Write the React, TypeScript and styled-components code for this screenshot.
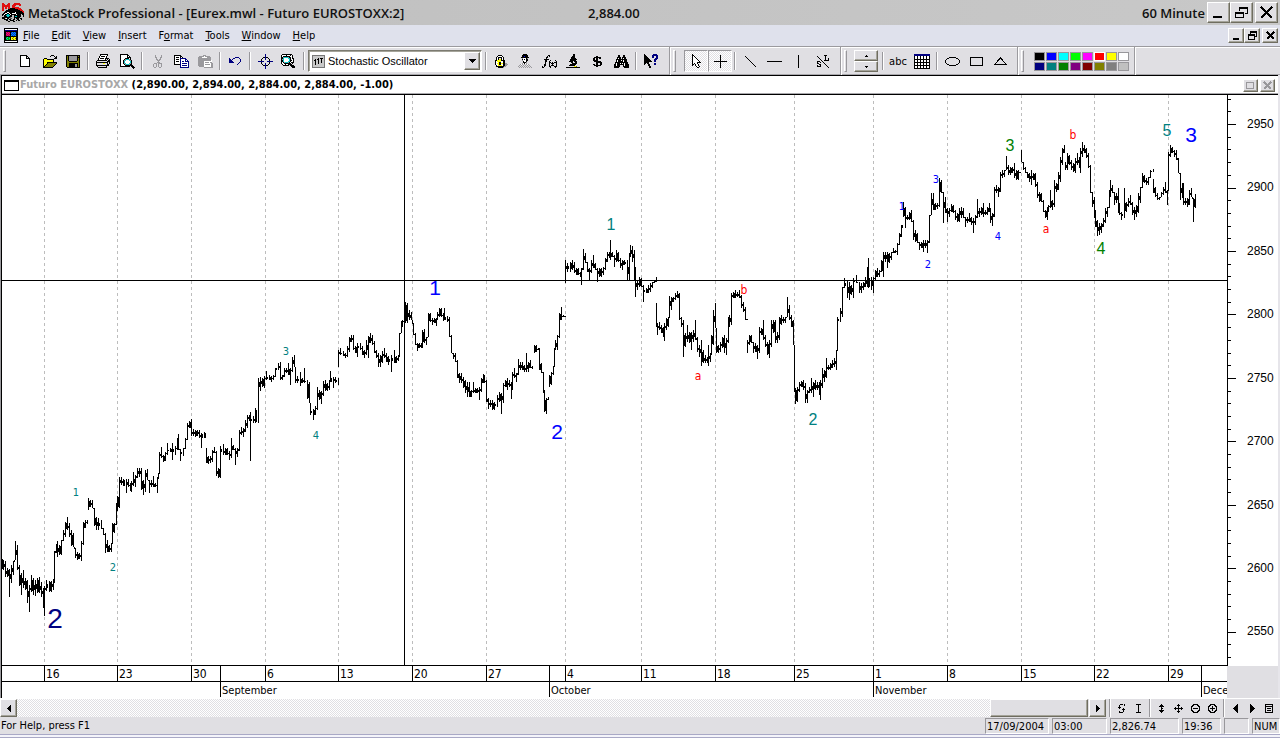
import React from "react";
import styled, { createGlobalStyle, css } from "styled-components";

const ui = `"DejaVu Sans Condensed", "Noto Sans", sans-serif`;
const sans = `"Liberation Sans", Arial, sans-serif`;
const face = "#e0dfe3";

const Global = createGlobalStyle`
  * { box-sizing: border-box; }
  body { margin: 0; background: ${face}; font-family: ${ui}; font-size: 11px; color: #000; }
  button, select { font: inherit; color: inherit; padding: 0; margin: 0; border-radius: 0; }
`;

const raised = css`
  background: ${face};
  border: 1px solid;
  border-color: #fff #6f6d60 #6f6d60 #fff;
  box-shadow: inset -1px -1px 0 #a5a49a;
`;
const dither = css`
  background: repeating-conic-gradient(#fff 0 25%, ${face} 0 50%) 0 0 / 2px 2px;
`;

const Shell = styled.div`
  display: flex;
  flex-direction: column;
  min-height: 100vh;
`;
const TitleBar = styled.header`
  display: grid;
  grid-template-columns: 24px minmax(0, 1fr) minmax(0, 1fr) auto auto;
  align-items: center;
  height: 25px;
  padding: 0 2px;
  background: linear-gradient(90deg, #bfbfbf, #c8c8c8);
  font: 600 13px/20px "Open Sans", sans-serif;
  color: #111;
  white-space: nowrap;
`;
const TitleText = styled.h1`
  margin: 0;
  padding-left: 2px;
  font: inherit;
`;
const LastPrice = styled.span`
  padding-left: 4px;
`;
const WindowButtons = styled.div`
  display: flex;
  align-items: center;
  padding-left: 2px;
`;
const WinButton = styled.button<{ $w: number; $h: number; $gap?: number }>`
  ${raised}
  width: ${(p) => p.$w}px;
  height: ${(p) => p.$h}px;
  margin-left: ${(p) => p.$gap ?? 0}px;
  display: flex;
  align-items: center;
  justify-content: center;
`;
const MenuBar = styled.nav`
  display: flex;
  align-items: center;
  height: 21px;
  padding: 0 2px 0 4px;
  background: #dfe1ec;
`;
const MenuItems = styled.div`
  display: flex;
  flex: 1;
  gap: 12px;
  padding-left: 5px;
`;
const MenuButton = styled.button`
  border: 0;
  background: none;
  line-height: 16px;
`;
const Toolbars = styled.div`
  display: flex;
  height: 29px;
  border-top: 1px solid #9b9a9e;
  box-shadow: inset 0 1px 0 #fff, inset 0 -1px 0 #a9a8ac;
`;
const Band = styled.div<{ $w: number; $lead: number }>`
  display: flex;
  align-items: center;
  flex: 0 0 ${(p) => p.$w}px;
  border-right: 1px solid #9b9a9e;
  box-shadow: 1px 0 0 #fff;
  & > :nth-child(2) { margin-left: ${(p) => p.$lead}px; }
`;
const Grip = styled.span`
  width: 3px;
  height: 22px;
  margin-left: 3px;
  border: 1px solid;
  border-color: #fff #98979b #98979b #fff;
`;
const Divider = styled.span`
  width: 2px;
  height: 18px;
  margin: 0 2px;
  border-left: 1px solid #98979b;
  border-right: 1px solid #fff;
`;
const Tool = styled.button<{ $on?: boolean }>`
  display: flex;
  align-items: center;
  justify-content: center;
  width: 24px;
  height: 22px;
  border: 1px solid transparent;
  background: none;
  ${(p) => p.$on && css`
    ${dither}
    border-color: #98979b #fff #fff #98979b;
  `}
`;
const Combo = styled.label`
  display: flex;
  align-items: center;
  width: 174px;
  height: 22px;
  margin: 0 1px;
  padding: 0 1px 0 3px;
  background: #fff;
  border: 1px solid;
  border-color: #7b7a70 #fff #fff #7b7a70;
  box-shadow: inset 1px 1px 0 #a5a49a;
  font-family: ${sans};
  select {
    flex: 1;
    min-width: 0;
    height: 18px;
    padding-left: 3px;
    border: 0;
    background: none;
    appearance: none;
    outline: none;
  }
`;
const ComboArrow = styled.span`
  ${raised}
  display: flex;
  align-items: center;
  justify-content: center;
  width: 16px;
  height: 18px;
`;
const Spinner = styled.div`
  display: flex;
  flex-direction: column;
  width: 24px;
  margin-right: 2px;
`;
const SpinButton = styled.button`
  ${raised}
  height: 11px;
  display: flex;
  align-items: center;
  justify-content: center;
`;
const Palette = styled.div`
  display: grid;
  grid-template-columns: repeat(8, 11px);
  grid-auto-rows: 9px;
  gap: 1px;
`;
const Swatch = styled.button<{ $c: string; $on?: boolean }>`
  background: ${(p) => p.$c};
  border: 1px solid ${(p) => (p.$on ? "#fff" : "#98979b")};
`;
const DocFrame = styled.main`
  border-left: 1px solid #9b9a9e;
  border-right: 2px solid #e6e5ea;
`;
const DocBar = styled.div`
  display: flex;
  align-items: center;
  height: 20px;
  padding: 0 3px 0 2px;
  border: 1px solid #000;
  border-right: 0;
  box-shadow: inset 0 -1px 0 #a9a8ac;
  background: #fff;
  font: bold 11px/16px ${ui};
  white-space: pre;
`;
const SystemBox = styled.span`
  width: 15px;
  height: 11px;
  margin-right: 1px;
  border: 1px solid #000;
  border-top-width: 2px;
`;
const DocName = styled.span`
  color: #a8a8a8;
`;
const DocValues = styled.span`
  flex: 1;
`;
const ChartGrid = styled.div`
  display: grid;
  grid-template-columns: minmax(0, 1fr) 51px;
  border-left: 1px solid #000;
`;
const Plot = styled.svg`
  display: block;
  width: 100%;
  height: 603px;
  background: #fff;
  text { font-family: ${ui}; font-size: 11px; }
`;
const PriceAxis = styled.svg`
  display: block;
  width: 100%;
  height: 571px;
  background: #fff;
  text { font-family: ${sans}; font-size: 12px; }
`;
const ScrollRow = styled.div`
  display: flex;
  align-items: center;
  height: 19px;
  padding-right: 2px;
  border-top: 1px solid #fff;
`;
const Track = styled.div`
  ${dither}
  display: flex;
  justify-content: flex-end;
  flex: 1;
  height: 18px;
`;
const Thumb = styled.div`
  ${raised}
  width: 98px;
`;
const ScrollButton = styled(WinButton)`
  margin-right: 1px;
`;
const SmallTool = styled.button`
  display: flex;
  align-items: center;
  justify-content: center;
  width: 17px;
  height: 17px;
  border: 0;
  background: none;
`;
const StatusBar = styled.footer`
  display: flex;
  align-items: center;
  gap: 3px;
  height: 17px;
  padding-left: 1px;
  p { flex: 1; margin: 0; }
`;
const Pane = styled.span<{ $w: number }>`
  width: ${(p) => p.$w}px;
  height: 16px;
  padding-left: 1px;
  line-height: 15px;
  border: 1px solid;
  border-color: #98979b #fff #fff #98979b;
`;
const BottomEdge = styled.div`
  height: 4px;
  border-top: 1px solid #a9a9c6;
  border-bottom: 1px solid #a9a9c6;
  background: #f4f4fa;
`;

/* Icons: strokes sit on whole pixels, so they are drawn without smoothing. */
function Icon({ children, w = 16, h = 16 }: { children: React.ReactNode; w?: number; h?: number }) {
  return (
    <svg width={w} height={h} viewBox={`0 0 ${w} ${h}`} fill="none" stroke="#000" shapeRendering="crispEdges" aria-hidden="true">
      {children}
    </svg>
  );
}
/* Pixel rows: each character picks a colour, a dot leaves the pixel empty. */
const inks: Record<string, string> = {
  k: "#000", w: "#fff", g: "#9a999d", y: "#ffff00", o: "#808000", n: "#000080", c: "#00c8c8", r: "#e01010", m: "#c000c0", b: "#0000ff", e: "#00b000", d: "#555",
};
function Pixels({ rows }: { rows: string[] }) {
  const w = Math.max(...rows.map((r) => r.length));
  return (
    <svg width={w} height={rows.length} shapeRendering="crispEdges" aria-hidden="true">
      {rows.flatMap((row, y) =>
        [...row].map((ch, x) => (inks[ch] ? <rect key={`${x}-${y}`} x={x} y={y} width="1" height="1" fill={inks[ch]} /> : null))
      )}
    </svg>
  );
}

const logo = [
  "rr....rr....rrrrrr......",
  "rrr..rrr...rrrrrrrr.....",
  "rrrrrrrr..rrrr...rr.....",
  "rrrrrrrr..rrr...........",
  "rr.rr.rr..rrrrrrr.......",
  "rr.rr.rrkkkkkrrrrrr.....",
  "rr....kkkkkkkkkkrrrr....",
  "rr..kkkkkkkkkkkkkkrrr...",
  "...kkkkkkkkkkkkkkkkkrr..",
  "..kkkwwkkkkkkwkkkkkkkr..",
  ".kkwwkkwkkwwwwkkkkkkkk..",
  "kkwkkcckwkkkkkwkkkk.kk..",
  "k.kkcccckk..kkkkkkk..k..",
  "..kkkcckkk..kcckkkk..k..",
  "kkkkkkkkd...kkkkkk......",
  "kkk.wkk.dd..k.kkk.kk....",
  "..kkkk.kk..kk..kk..k....",
  "....kk..kkkk..k.kk......",
  "......kk...kk...........",
];
const mdiIcon = [
  "kkkkkkkkkkkkkk",
  "kwwwwwwwwwwwwk",
  "knnnnnnnnnnnnk",
  "kkkkkkkkkkkkkk",
  "kkmrmrkbcbcbkk",
  "kkrmrmkcbcbckk",
  "kkmrmrkbcbcbkk",
  "kkrmrmkcbcbckk",
  "kkkkkkkkkkkkkk",
  "kkeceekyyoyykk",
  "kkceeckyoyyokk",
  "kkeceekyyoyykk",
  "kkkkkkkkkkkkkk",
  "kwwwwwwwwwwwwk",
  "kkkkkkkkkkkkkk",
];
const lockIcon = [
  "....kkkk......",
  "...kwwwwk.....",
  "..kwkkkkwk....",
  "..kwk..kwk....",
  "..kwkyykwk....",
  ".kkyyyykkkk...",
  ".kwyyyywwkk...",
  ".kwwykkwwkk...",
  ".kwyykkyykkgg.",
  ".kwwykkwwkkggg",
  "..kwyyyywkkgg.",
  "..kkkkkkkkgg..",
  "....kkkkkg....",
];
const expertIcon = [
  ".....kkkk.....",
  "....kkkkkk....",
  "....kkbkkk....",
  "...kkkkkkkk...",
  "....gwwwkg....",
  "....kwkwkk....",
  "....gwwwkk....",
  ".....kwwk.....",
  ".....kkkg.....",
  "....gwkwg.....",
  "..gwg.g.gwg...",
  ".g.g.g.g.g.g..",
  "g.g.g.g.g.g.g.",
  ".g.g.g.g.g.g.g",
];
const scopeIcon = [
  ".......kk.....",
  ".......kk.....",
  "......kkk.....",
  ".....kkkk.....",
  ".....kkkkk....",
  "....kkkkkkk...",
  "....kkkkkk....",
  "...kkkk.kkk...",
  ".....kk..kk...",
  "......kkkkk...",
  "....kkkkkk....",
  "...kkkkkk.....",
  "........yyo...",
  "kkkkkkkkkkkkkk",
];
const binoculars = [
  "....kk...kk....",
  "....kk...kk....",
  "...kkkk.kkkk...",
  "...kwkk.kwkk...",
  "..kkkkkkkkkkk..",
  "..kwkkkwkwkkk..",
  "..kwkkkkkwkkk..",
  ".kkkkkkkkkkkkk.",
  ".kwkkkwkwkwkkk.",
  "kkwkkkkkkkwkkkk",
  "kkwkkk...kwkkkk",
  "kkkkkk...kkkkkk",
  "kkkkk.....kkkkk",
];
const helpIcon = [
  "k........nnnn..",
  "kk......nnnnnn.",
  "kkk.....nn..nn.",
  "kkkk....nn..nn.",
  "kkkkk......nnn.",
  "kkkkkk....nnn..",
  "kkkkkkk...nn...",
  "kkkkkkkk..nn...",
  "kkkkk..........",
  "kk.kk.....nn...",
  "k...kk....nn...",
  "....kk.........",
  ".....kk........",
  ".....kk........",
];
const dollar = [
  "....kk.....",
  "..kkkkkkk..",
  ".kk.kk.kk..",
  ".kk.kk.....",
  ".kkkkk.....",
  "..kkkkkkk..",
  "....kkkkkk.",
  "....kk..kk.",
  ".kk.kk..kk.",
  "..kkkkkkk..",
  "....kk.....",
];
const fxIcon = [
  "......kk.......",
  ".....k.k.......",
  "....kk.........",
  "....k..........",
  "..kkkkk........",
  "...kk...k....k.",
  "...kk..k......k",
  "...k...kk.k.kkk",
  "...k...k.kkk..k",
  "..kk...k..k...k",
  "..kk...k.kkk..k",
  "k.k....kk...kkk",
  "kk......k....k.",
];
const arrowPointer = [
  "k........",
  "kk.......",
  "kwk......",
  "kwwk.....",
  "kwwwk....",
  "kwwwwk...",
  "kwwwwwk..",
  "kwwwwwwk.",
  "kwwwwkkkk",
  "kwkwwk...",
  "kk.kwwk..",
  "k..kwwk..",
  "....kwwk.",
  ".....kk..",
];
const slIcon = [
  "........kkk..",
  ".k.......k...",
  "..k......k...",
  "...k.....k..k",
  "....k....k..k",
  ".....k..kkkkk",
  ".kkk..k......",
  ".k..k..k.....",
  ".kk.....k....",
  "...kk....k...",
  ".k..k.....k..",
  ".kkkk......k.",
  "............k",
];
const saveIcon = [
  "kkkkkkkkkkkkkk",
  "kokggggggggkok",
  "kokggggggggkkk",
  "kokggggggggkok",
  "kokggggggggkok",
  "kokggggggggkok",
  "kookkkkkkkkook",
  "kooooooooooook",
  "kookkkkkkkkkok",
  "kookkkkkkggkok",
  "kookkkkkkggkok",
  "kookkkkkkggkok",
  ".kkkkkkkkkkkkk",
];
const openIcon = [
  ".........kkk...",
  "........k...k.k",
  ".............kk",
  "..kkk.......kkk",
  ".kyyykkkkkkk...",
  ".kyyyyyyyyyk...",
  ".kyyyyyyyyyk...",
  ".kyyykkkkkkkkkk",
  ".kyyykooooooook",
  ".kyykooooooook.",
  ".kykooooooook..",
  ".kkooooooook...",
  ".kkkkkkkkkk....",
];
const printIcon = [
  "....kkkkkkkk...",
  "....kwwwwwwk...",
  "...kwkkkkwk....",
  "...kwwwwwwk....",
  "..kwkkkkwkkkk..",
  "..kwwwwwwk.k.k.",
  ".kkkkkkkkkk.kk.",
  "k..........kkk.",
  "kkkkkkkkkkkk.k.",
  "k......yy..k.k.",
  "k..........kk..",
  "kkkkkkkkkkkkk..",
  ".k........k....",
  "..kkkkkkkkk....",
];
const previewIcon = [
  "kkkkkkkk.......",
  "kwwwwwwkk......",
  "kwwwwwwkwk.....",
  "kwwwwwwkkkk....",
  "kwwwwkkkkwk....",
  "kwwwkgcccgk....",
  "kwwkgcwwwcgk...",
  "kwwkcwwwwwck...",
  "kwwkcwwwwwck...",
  "kwwkgcwwwcgk...",
  "kwwwkgcccgkk...",
  "kwwwwkkkkkkkk..",
  "kkkkkkkkkk.kkk.",
  "............kkk",
  ".............k.",
];
const cutIcon = [
  "...g.....g",
  "...g.....g",
  "...gg...gg",
  "....g...g.",
  "....gg.gg.",
  ".....ggg..",
  "......g...",
  ".....ggg..",
  "..ggg.gggg",
  ".g..g.g..g",
  ".g..g.g..g",
  ".g..g.g..g",
  "..gg...gg.",
];
const copyIcon = [
  "kkkkkkk........",
  "kwwwwwkk.......",
  "kwkkkwkwk......",
  "kwwwwwnnnnnn...",
  "kwkkkwnwwwwnn..",
  "kwwwwwnwwwwnwn.",
  "kwkkkwnwnnwnnnn",
  "kwwwwwnwwwwwwwn",
  "kwwwwwnwnnnnnwn",
  "kkkkkknwwwwwwwn",
  "......nwnnnnnwn",
  "......nwwwwwwwn",
  "......nnnnnnnnn",
];
const pasteIcon = [
  ".....ggg.......",
  ".gggggwggggg...",
  "ggggwwwwwgggg..",
  "ggggggggggggg..",
  "ggggggggggggg..",
  "gggggggggggggw.",
  "ggggggwwwwwwww.",
  "ggggggwggggwgg.",
  "ggggggwwwwwwwgg",
  "ggggggwgggggwgg",
  "ggggggwwwwwwwgg",
  ".gggggwwwwwwwgg",
  "......ggggggggg",
];
const undoIcon = [
  "......nnnn..",
  "n...nn....n.",
  "nn.n.......n",
  "nnn........n",
  "nnnn.......n",
  "nnnnn.....n.",
  ".........n..",
  "........n...",
];
const searchIcon = [
  ".kkkkkkkkkk.....",
  "kwwwwkwwwkwk....",
  "kwkkkkkkkwwk....",
  "kkgccccgkkwk....",
  "kkcwwwwcckwkk...",
  "kgcwwwwwck.wk...",
  "kkcwwwwwckkwk...",
  "kkcwwwwcckwwk...",
  "kwkgcccgkwkkk...",
  "kwwkkkkkkk.k....",
  ".kwwkwwkkkk.....",
  "..kkkkkk.kkkk...",
  "..........kkkk..",
  "...........kkk..",
];

function Tri({ d, w, h }: { d: string; w: number; h: number }) {
  return (
    <svg width={w} height={h} aria-hidden="true" shapeRendering="crispEdges">
      <path d={d} />
    </svg>
  );
}

/* Price bars: x, top and bottom of each bar. */
const bars = `2 559 569,3 560 570,5 561 577,7 568 577,9 569 597,11 565 583,13 561 575,15 541 560,17 545 570,19 565 586,21 573 595,23 570 588,25 578 590,27 580 603,29 585 612,31 575 592,33 578 595,35 580 596,37 578 593,39 577 593,41 582 597,43 588 608,44 586 616,46 580 591,49 581 592,51 581 592,53 579 590,54 551 583,56 544 553,57 541 557,59 545 555,61 540 555,63 530 541,65 522 537,67 517 530,69 523 537,71 530 546,73 533 547,75 548 558,77 552 560,79 553 559,81 541 561,83 522 545,85 520 528,87 520 524,88 498 510,90 500 507,92 500 508,94 508 526,96 517 530,98 518 530,101 520 529,103 528 535,105 533 553,107 540 552,109 545 552,111 543 552,112 523 541,114 523 533,116 503 525,117 496 511,119 477 508,121 477 485,123 479 486,126 479 493,128 479 487,130 483 491,131 481 492,133 472 486,135 475 487,137 468 478,139 468 477,141 468 490,143 480 495,145 470 492,147 469 480,149 480 493,151 480 487,153 476 487,155 483 487,157 477 493,158 473 479,159 452 473,161 447 458,163 455 462,165 452 461,167 443 455,170 448 452,172 443 460,175 446 455,177 438 450,178 434 450,180 449 461,183 448 456,185 438 449,187 423 440,189 421 428,191 419 436,193 429 436,195 430 437,197 430 436,199 430 438,201 433 448,204 432 438,205 433 438,206 448 463,208 456 464,210 456 463,212 450 462,214 447 453,216 451 476,218 468 478,220 446 478,223 444 455,225 448 455,227 448 455,229 451 460,231 438 458,233 445 450,235 448 465,237 448 457,239 430 451,241 427 435,243 428 437,245 420 432,247 415 428,249 415 421,250 412 461,253 416 423,255 408 423,258 378 423,260 377 391,262 378 387,264 376 388,266 371 380,269 375 380,271 376 382,273 375 380,275 368 377,278 363 370,280 362 380,282 375 380,284 368 377,286 368 373,288 363 375,290 368 385,292 357 372,294 355 367,295 369 383,297 376 383,300 372 386,302 378 383,304 368 383,307 380 399,309 382 403,310 404 415,313 409 420,315 406 415,317 387 410,319 390 400,321 391 404,323 381 396,325 380 391,327 383 391,329 380 390,330 371 382,333 377 388,335 377 383,338 378 385,338 350 367,340 348 355,343 351 356,345 353 358,347 346 357,349 337 352,351 335 342,353 335 350,355 346 353,357 343 357,360 343 350,362 346 355,364 350 358,366 340 355,368 336 358,370 333 343,372 335 345,374 341 353,376 350 358,378 353 367,380 355 367,382 351 363,384 348 358,386 353 362,388 356 365,391 355 372,394 350 363,396 356 363,398 355 361,399 333 357,401 321 333,402 320 327,405 302 323,407 303 323,409 310 320,411 312 320,413 323 335,415 333 345,417 343 351,419 343 348,421 343 348,422 330 348,424 329 343,426 337 345,428 313 337,430 313 322,432 318 325,434 318 323,436 318 326,437 312 320,439 308 317,441 308 317,443 313 321,444 308 320,447 316 322,449 317 337,451 335 353,453 353 359,455 353 362,457 360 378,459 373 383,461 373 383,463 377 388,465 380 393,467 382 397,469 382 397,471 390 397,473 382 393,475 388 393,477 388 393,479 387 400,481 378 392,483 374 383,484 375 383,486 380 402,488 398 409,490 400 407,492 400 410,494 402 410,497 395 407,499 392 402,501 393 414,503 383 403,505 380 387,507 378 390,509 380 387,511 382 399,512 372 390,514 368 378,516 373 382,518 359 375,520 362 370,522 362 370,524 365 372,526 353 372,528 362 372,530 360 368,532 366 369,534 345 353,536 345 352,538 348 350,539 348 370,541 363 373,543 372 393,544 390 412,546 398 414,548 397 400,549 375 387,551 372 385,553 366 375,554 348 366,555 340 350,557 335 350,559 313 338,561 307 320,563 315 317,565 316 317,565 260 283,567 263 272,570 262 272,572 260 270,574 262 273,576 268 275,578 268 275,580 272 277,581 268 285,583 249 270,585 253 263,587 262 272,589 268 280,591 260 273,593 255 268,595 263 270,597 268 282,599 268 277,601 268 277,603 267 275,605 258 270,607 252 262,609 252 258,610 240 260,612 252 257,614 255 267,616 250 262,618 252 262,620 258 268,622 260 270,624 260 265,627 260 280,629 253 280,630 245 257,632 246 262,634 250 280,635 267 297,637 280 290,639 277 287,641 278 287,643 285 302,646 288 293,648 285 293,650 283 292,652 282 288,654 280 283,656 277 282,656 303 327,657 323 335,659 322 330,661 325 333,663 327 337,664 323 341,666 318 330,668 317 327,669 296 312,671 297 310,673 297 302,675 293 300,677 291 298,679 293 320,681 317 327,683 320 357,685 333 347,687 325 342,689 332 343,691 332 350,693 330 342,695 320 340,697 337 352,699 345 357,701 340 366,703 350 363,705 355 363,707 357 363,708 345 366,710 353 362,711 335 355,713 310 345,715 303 328,716 333 353,718 345 353,720 342 352,722 337 348,724 335 353,726 338 355,728 317 343,729 315 327,731 293 325,733 292 298,735 290 298,737 292 297,739 290 298,741 295 308,743 302 312,745 307 320,747 319 320,747 340 353,749 335 345,751 335 343,753 342 353,755 343 352,757 345 359,759 327 353,761 328 335,763 320 340,765 335 347,767 342 355,769 340 358,771 320 347,773 320 333,775 320 343,777 332 343,779 317 340,781 315 325,783 317 323,785 317 323,787 297 317,789 305 320,791 315 327,793 320 345,794 345 392,795 388 404,797 387 402,799 382 392,801 381 387,803 380 390,805 383 403,807 390 403,809 387 393,811 378 393,813 382 397,815 380 390,817 382 390,819 382 395,820 380 400,822 368 388,824 370 382,826 358 378,828 365 370,830 363 370,832 360 368,834 358 367,836 350 370,837 317 350,840 308 322,842 287 317,844 278 288,847 280 298,849 282 300,851 285 295,853 278 298,856 275 283,859 282 293,861 283 293,863 282 290,865 277 287,867 267 287,868 258 288,871 277 290,873 277 293,875 270 280,877 268 277,879 270 277,881 260 272,883 252 277,885 252 262,887 252 268,889 253 263,891 252 260,893 248 253,895 250 253,897 243 255,899 233 245,901 225 237,902 225 228,903 202 217,905 207 228,907 215 220,909 212 220,911 210 222,913 220 240,915 230 242,917 233 243,919 242 250,921 242 248,923 240 252,925 240 248,927 240 253,929 215 243,931 193 215,933 193 210,935 203 210,937 203 209,939 178 207,941 180 193,943 192 223,945 197 213,947 208 222,949 208 217,951 204 212,953 205 213,955 210 220,957 213 222,959 208 222,961 207 218,963 208 218,965 217 227,967 217 223,969 213 222,971 217 225,973 218 233,975 215 225,977 199 218,979 208 217,981 207 215,983 203 217,985 210 215,987 207 215,989 203 212,990 208 223,992 213 226,994 187 217,996 185 193,998 187 197,1000 172 192,1002 170 178,1004 170 177,1006 156 170,1008 165 175,1010 167 175,1012 167 173,1014 163 178,1016 170 180,1018 170 180,1020 172 173,1021 150 162,1023 162 170,1025 167 173,1027 172 178,1029 173 182,1031 170 185,1033 173 180,1035 173 187,1037 182 198,1039 192 202,1041 193 202,1043 200 212,1045 210 218,1047 207 220,1048 205 212,1050 190 208,1052 200 210,1054 180 207,1056 183 192,1058 172 190,1060 157 182,1062 148 165,1064 145 153,1065 162 170,1067 153 170,1069 155 165,1071 160 170,1073 163 172,1075 158 173,1077 153 165,1079 157 168,1080 148 173,1082 142 157,1084 145 153,1086 148 158,1088 153 168,1090 165 193,1092 192 207,1094 197 218,1095 210 227,1097 220 236,1099 223 235,1101 223 233,1103 218 227,1105 208 223,1107 207 217,1109 190 208,1110 180 197,1112 185 193,1114 192 205,1116 193 203,1118 188 213,1119 203 215,1121 212 220,1124 188 218,1126 202 212,1128 198 207,1130 195 205,1132 202 215,1134 207 220,1136 205 217,1138 193 213,1140 187 203,1142 173 188,1144 175 183,1146 178 185,1148 177 185,1150 170 178,1153 169 172,1153 179 193,1155 187 197,1157 193 200,1159 197 200,1161 192 197,1163 187 195,1165 182 193,1167 190 205,1168 152 185,1170 145 157,1172 147 153,1174 150 157,1176 150 160,1178 158 173,1180 173 200,1182 183 198,1183 183 205,1185 198 205,1187 198 207,1189 190 205,1191 188 197,1193 198 222,1195 194 208`
  .split(",")
  .map((b) => b.split(" ").map(Number));

const barPath = bars
  .map(([x, top, bottom], i) => {
    const bar = `M${x} ${top}h1V${bottom}h-1z`;
    const next = bars[i + 1];
    if (!next || next[0] - x > 3 || next[0] === x) return bar;
    const from = Math.max(top, next[1]);
    const to = Math.min(bottom, next[2]);
    if (to <= from) return to - from < -6 ? bar : `${bar}M${x + 1} ${to}h1V${from + 1}h-1z`;
    const size = Math.max(1, Math.round((to - from) * (i % 3 === 0 ? 0.8 : 0.35)));
    const start = Math.round((from + to - size) / 2);
    return `${bar}M${x + 1} ${start}h1v${size}h-1z`;
  })
  .join("");

const days: [number, string][] = [
  [44, "16"], [117, "23"], [191, "30"], [265, "6"], [338, "13"], [412, "20"], [486, "27"], [565, "4"],
  [641, "11"], [715, "18"], [794, "25"], [873, "1"], [947, "8"], [1021, "15"], [1094, "22"], [1168, "29"],
];
const months: [number, string][] = [[220, "September"], [549, "October"], [873, "November"], [1201, "December"]];
const blue = "#0000ff", teal = "#008080", green = "#008000", red = "#ff0000", navy = "#000080";
/* Wave labels: text, centre x, baseline, size, colour. */
const waves: [string, number, number, number, string][] = [
  ["2", 55, 628, 28, navy], ["1", 76, 496, 11, teal], ["2", 113, 571, 11, teal], ["3", 286, 355, 11, teal],
  ["4", 316, 439, 11, teal], ["1", 435, 295, 21, blue], ["2", 557, 439, 21, blue], ["1", 611, 230, 16, teal],
  ["a", 698, 380, 12, red], ["b", 744, 294, 12, red], ["2", 813, 425, 16, teal], ["1", 902, 210, 11, blue],
  ["2", 928, 268, 11, blue], ["3", 936, 183, 11, blue], ["4", 998, 240, 11, blue], ["3", 1010, 151, 16, green],
  ["a", 1046, 233, 12, red], ["b", 1073, 139, 12, red], ["4", 1101, 254, 16, green], ["5", 1167, 136, 16, teal],
  ["3", 1191, 142, 21, blue],
];
const prices = [2950, 2900, 2850, 2800, 2750, 2700, 2650, 2600, 2550];

const swatches = [
  "#000000", "#0000ff", "#00ffff", "#00ff00", "#ff00ff", "#ff0000", "#ffff00", "#ffffff",
  "#000080", "#008080", "#008000", "#800080", "#800000", "#808000", "#808080", "#c0c0c0",
];

function MinMaxClose({ small }: { small?: boolean }) {
  const [w, h] = small ? [16, 15] : [23, 21];
  return (
    <WindowButtons>
      <WinButton $w={w} $h={h} aria-label="Minimize">
        {small ? <Icon w={11} h={11}><path d="M2 9h6" strokeWidth="2" /></Icon> : <Icon w={15} h={15}><path d="M2 12h9" strokeWidth="2" /></Icon>}
      </WinButton>
      <WinButton $w={w} $h={h} aria-label="Restore">
        {small ? (
          <Icon w={11} h={11}><path d="M3.5 4V1.500h6v5h-2M1.500 4.500h6v5h-6zM3 2h7M1 5h7" /></Icon>
        ) : (
          <Icon w={15} h={15}><path d="M5.500 6V2.500h8v6h-3M1.500 7.500h8v5h-8zM5 3h9M1 8h9" /></Icon>
        )}
      </WinButton>
      <WinButton $w={w} $h={h} $gap={2} aria-label="Close">
        {small ? <Icon w={11} h={11}><path d="M2 2l7 7M9 2l-7 7" strokeWidth="2" /></Icon> : <Icon w={15} h={15}><path d="M2 2l11 11M13 2l-11 11" strokeWidth="2" /></Icon>}
      </WinButton>
    </WindowButtons>
  );
}

function Menu({ text, hot = 0 }: { text: string; hot?: number }) {
  return (
    <MenuButton>
      {text.slice(0, hot)}
      <u>{text[hot]}</u>
      {text.slice(hot + 1)}
    </MenuButton>
  );
}

function PixelTool({ label, rows }: { label: string; rows: string[] }) {
  return (
    <Tool aria-label={label}>
      <Pixels rows={rows} />
    </Tool>
  );
}

function PriceChart() {
  return (
    <ChartGrid>
      <Plot role="img" aria-label="Futuro EUROSTOXX 60 minute price chart">
        <g transform="translate(-2 -95)">
          <g stroke="#bdbdbd" strokeDasharray="3 3" shapeRendering="crispEdges">
            {days.map(([x]) => <path key={x} d={`M${x}.5 95V665`} />)}
          </g>
          <path d={barPath} shapeRendering="crispEdges" />
          {waves.map(([t, x, y, size, color], i) => (
            <text key={i} x={x} y={y} textAnchor="middle" fill={color} style={{ fontSize: size, fontFamily: size > 12 ? sans : ui }}>
              {t}
            </text>
          ))}
          <g stroke="#000" shapeRendering="crispEdges">
            <path d="M404.500 95V665M2 280.500H1228M2 665.500H1228M2 681.500H1228" />
            {days.map(([x]) => <path key={x} d={`M${x}.5 665V681`} />)}
            {months.map(([x]) => <path key={x} d={`M${x}.5 665V697`} />)}
          </g>
          {days.map(([x, t]) => <text key={x} x={x + 2} y="678" style={{ fontSize: 12 }}>{t}</text>)}
          {months.map(([x, t]) => <text key={x} x={x + 2} y="694">{t}</text>)}
        </g>
      </Plot>
      <PriceAxis>
        <g transform="translate(-1227 -95)">
          <g stroke="#000" shapeRendering="crispEdges">
            <path d="M1227.500 95V666" />
            {Array.from({ length: 45 }, (_, i) => {
              const y = Math.round(98.700 + i * 12.690);
              return <path key={i} d={`M1228 ${y}.500h${i % 5 === 2 ? 8 : 3}`} />;
            })}
          </g>
          {prices.map((p, i) => (
            <text key={p} x="1247" y={Math.round(128 + i * 63.430)}>{p}</text>
          ))}
        </g>
      </PriceAxis>
    </ChartGrid>
  );
}

export default function App() {
  return (
    <Shell>
      <Global />
      <TitleBar>
        <Pixels rows={logo} />
        <TitleText>MetaStock Professional - [Eurex.mwl - Futuro EUROSTOXX:2]</TitleText>
        <LastPrice>2,884.00</LastPrice>
        <span>60 Minute</span>
        <MinMaxClose />
      </TitleBar>
      <MenuBar>
        <Pixels rows={mdiIcon} />
        <MenuItems>
          <Menu text="File" />
          <Menu text="Edit" />
          <Menu text="View" />
          <Menu text="Insert" />
          <Menu text="Format" hot={1} />
          <Menu text="Tools" />
          <Menu text="Window" />
          <Menu text="Help" />
        </MenuItems>
        <MinMaxClose small />
      </MenuBar>
      <Toolbars>
        <Band $w={670} $lead={7}>
          <Grip />
          <Tool aria-label="New">
            <Icon w={12} h={14}><path d="M1.500 1.500h6l3 3v8h-9zM7.500 1v3.500h3" fill="#fff" /></Icon>
          </Tool>
          <PixelTool label="Open" rows={openIcon} />
          <PixelTool label="Save" rows={saveIcon} />
          <Divider />
          <PixelTool label="Print" rows={printIcon} />
          <PixelTool label="Print preview" rows={previewIcon} />
          <Divider />
          <PixelTool label="Cut" rows={cutIcon} />
          <PixelTool label="Copy" rows={copyIcon} />
          <PixelTool label="Paste" rows={pasteIcon} />
          <Divider />
          <PixelTool label="Undo" rows={undoIcon} />
          <Divider />
          <Tool aria-label="Choose symbol">
            <Icon w={15} h={15}>
              <path d="M5.500 3.500h4l2 2v4l-2 2h-4l-2-2v-4z" />
              <path d="M7.500 0v6M7.500 9v6M0 7.500h6M9 7.500h6" stroke="#000080" />
            </Icon>
          </Tool>
          <PixelTool label="Explore" rows={searchIcon} />
          <Divider />
          <Combo>
            <Icon w={13} h={13}>
              <path d="M.5.5h12v12h-12z" fill="#c8c8c8" stroke="#777" />
              <path d="M3.500 4v6M2 5.500h2M6.500 3v6M5 4.500h2M9.500 3v5M8 3.500h3" />
            </Icon>
            <select aria-label="Indicator" defaultValue="Stochastic Oscillator">
              <option>Stochastic Oscillator</option>
            </select>
            <ComboArrow><Tri d="M0 0h7L3.500 4z" w={7} h={4} /></ComboArrow>
          </Combo>
          <Divider />
          <PixelTool label="Security" rows={lockIcon} />
          <PixelTool label="Expert advisor" rows={expertIcon} />
          <PixelTool label="Indicator builder" rows={fxIcon} />
          <PixelTool label="Explorer" rows={scopeIcon} />
          <PixelTool label="System tester" rows={dollar} />
          <PixelTool label="OptionScope" rows={binoculars} />
          <Divider />
          <PixelTool label="Context help" rows={helpIcon} />
        </Band>
        <Band $w={171} $lead={8}>
          <Grip />
          <Tool $on aria-label="Pointer"><Pixels rows={arrowPointer} /></Tool>
          <Tool $on aria-label="Crosshair"><Icon w={13} h={13}><path d="M6.500 0v13M0 6.500h13" /></Icon></Tool>
          <Divider />
          <Tool aria-label="Trendline"><Icon w={13} h={13}><path d="M1 1l11 11" /></Icon></Tool>
          <Tool aria-label="Horizontal line"><Icon w={15} h={15}><path d="M0 7.500h15" /></Icon></Tool>
          <Tool aria-label="Vertical line"><Icon w={13} h={13}><path d="M6.500 0v13" /></Icon></Tool>
          <PixelTool label="Speed lines" rows={slIcon} />
        </Band>
        <Band $w={177} $lead={7}>
          <Grip />
          <Spinner>
            <SpinButton aria-label="Up"><Tri d="M0 2L1.500 0L3 2z" w={3} h={2} /></SpinButton>
            <SpinButton aria-label="Down"><Tri d="M0 0h3L1.500 2z" w={3} h={2} /></SpinButton>
          </Spinner>
          <Divider />
          <Tool aria-label="Text"><span>abc</span></Tool>
          <Tool aria-label="Grid">
            <Icon w={16} h={15}>
              <path d="M.5.5h15v14H.5zM3.500 1v14M6.500 1v14M9.500 1v14M12.500 1v14M0 5.500h16M0 8.500h16M0 11.500h16" fill="#fff" />
              <path d="M0 1h16" stroke="#000080" strokeWidth="2" />
            </Icon>
          </Tool>
          <Divider />
          <Tool aria-label="Ellipse"><Icon w={15} h={11}><ellipse cx="7.500" cy="5.500" rx="7" ry="4" /></Icon></Tool>
          <Tool aria-label="Rectangle"><Icon w={13} h={9}><path d="M.5.5h12v8H.5z" /></Icon></Tool>
          <Tool aria-label="Triangle"><Icon w={13} h={8}><path d="M.5 7.500L6.500 1l6 6.500z" /></Icon></Tool>
        </Band>
        <Band $w={117} $lead={10}>
          <Grip />
          <Palette>
            {swatches.map((c) => <Swatch key={c} $c={c} $on={c === "#ff0000"} aria-label={`Color ${c}`} />)}
          </Palette>
        </Band>
      </Toolbars>
      <DocFrame>
        <DocBar>
          <SystemBox />
          <DocName>Futuro EUROSTOXX </DocName>
          <DocValues>(2,890.00, 2,894.00, 2,884.00, 2,884.00, -1.00)</DocValues>
          <WinButton $w={15} $h={13} aria-label="Maximize chart">
            <Icon w={9} h={9}><path d="M.5 1.500h7v6h-7zM0 1h8" stroke="#98979b" /></Icon>
          </WinButton>
          <WinButton $w={15} $h={13} $gap={2} aria-label="Close chart">
            <Icon w={9} h={9}><path d="M1 1l7 7M8 1l-7 7" stroke="#98979b" strokeWidth="2" /></Icon>
          </WinButton>
        </DocBar>
        <PriceChart />
      </DocFrame>
      <ScrollRow>
        <WinButton $w={17} $h={18} aria-label="Scroll left"><Tri d="M4 0v7L0 3.500z" w={4} h={7} /></WinButton>
        <Track><Thumb /></Track>
        <ScrollButton $w={17} $h={18} $gap={1} aria-label="Scroll right"><Tri d="M0 0v7L4 3.500z" w={4} h={7} /></ScrollButton>
        <Divider />
        <SmallTool aria-label="Refresh"><Icon w={9} h={11}><path d="M3 1.500h3M2.500 2v4M1 4.500h3M7 1v2M3 9.500h3M6.500 9v-4M5 6.500h3M2 8v2" /></Icon></SmallTool>
        <SmallTool aria-label="Text cursor"><Icon w={7} h={9}><path d="M3.500 0v9M1 .5h5M1 8.500h5" /></Icon></SmallTool>
        <Divider />
        <SmallTool aria-label="Compress vertically"><Icon w={9} h={11}><path d="M4.500 1v9M3 2.500h3M2 3.500h5M2 7.500h5M3 8.500h3M4 5.500h2" /></Icon></SmallTool>
        <SmallTool aria-label="Move"><Icon w={9} h={9}><path d="M4.500 0v9M0 4.500h9M3 1.500h3M3 7.500h3M1.500 3v3M7.500 3v3" /></Icon></SmallTool>
        <SmallTool aria-label="Zoom out"><Icon w={9} h={9}><path d="M3 .5h3l2.500 2.500v3l-2.500 2.500h-3l-2.500-2.500v-3zM2 4.500h5" /></Icon></SmallTool>
        <SmallTool aria-label="Zoom in"><Icon w={9} h={9}><path d="M3 .5h3l2.500 2.500v3l-2.500 2.500h-3l-2.500-2.500v-3zM2 4.500h5M4.500 2v5" /></Icon></SmallTool>
        <Divider />
        <SmallTool aria-label="Previous"><Tri d="M5 0v9L0 4.500z" w={5} h={9} /></SmallTool>
        <SmallTool aria-label="Next"><Tri d="M0 0v9L5 4.500z" w={5} h={9} /></SmallTool>
        <SmallTool aria-label="Properties"><Icon w={9} h={9}><path d="M.5.5h7v8h-7zM0 2.500h8M2 4.500h4M2 6.500h4" /></Icon></SmallTool>
      </ScrollRow>
      <StatusBar>
        <p>For Help, press F1</p>
        <Pane $w={64}>17/09/2004</Pane>
        <Pane $w={55}>03:00</Pane>
        <Pane $w={69}>2,826.74</Pane>
        <Pane $w={39}>19:36</Pane>
        <Pane $w={25} />
        <Pane $w={28}>NUM</Pane>
      </StatusBar>
      <BottomEdge />
    </Shell>
  );
}
